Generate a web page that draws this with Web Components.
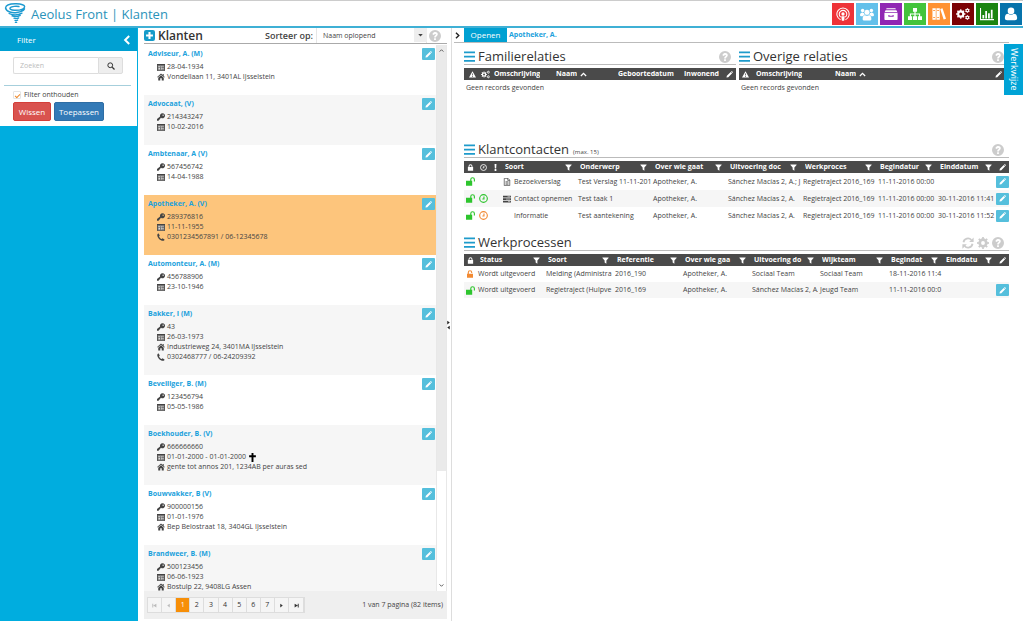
<!DOCTYPE html>
<html lang="nl">
<head>
<meta charset="utf-8">
<title>Aeolus Front | Klanten</title>
<style>
html, body { margin: 0; height: 100%; }
body { font-family: "Open Sans", "Noto Sans", sans-serif; font-size: 7px; line-height: 10px; color: #444; background: #fff; overflow: hidden;
  --blue: #00a0d2; --link: #1ba1dc; --edit: #55bfdc; --dark: #4a4a4a; }
</style>
</head>
<body>
<ae-app></ae-app>
<script>
const define = (name, html, setup) => {
  const template = document.createElement('template');
  template.innerHTML = html;
  customElements.define(name, class extends HTMLElement {
    connectedCallback() {
      if (this.shadowRoot) return;
      const root = this.attachShadow({ mode: 'open' });
      root.append(template.content.cloneNode(true));
      if (setup) setup(this, root);
    }
  });
};

const gear = (cx, cy, r, teeth = 8) => {
  let s = `<circle cx="${cx}" cy="${cy}" r="${r * 0.6}" fill="none" stroke="currentColor" stroke-width="${r * 0.5}"/>`;
  for (let i = 0; i < teeth; i++) s += `<rect x="${cx - r * 0.17}" y="${cy - r * 1.08}" width="${r * 0.34}" height="${r * 0.34}" transform="rotate(${i * 360 / teeth} ${cx} ${cy})"/>`;
  return s;
};
const icons = {
  podcast: '<g fill="none" stroke="currentColor"><path stroke-width="1.2" d="M5.2 14.6A7 7 0 1 1 10.8 14.6M5.4 11.6A4.3 4.3 0 1 1 10.6 11.6"/></g><circle cx="8" cy="8" r="1.9"/><path d="M6 10.6h4l-.7 5H6.7z"/>',
  users: '<circle cx="3" cy="4" r="2"/><circle cx="13" cy="4" r="2"/><circle cx="8" cy="6" r="2.9"/><path d="M0 9.8C0 7 1.500 6.300 3 6.400l1.600.8C4.700 8 5 8.600 5.500 9 4 9.200 3.600 9.800 3.200 10.500H1zM16 9.800C16 7 14.500 6.300 13 6.400l-1.600.8c-.1.800-.4 1.400-.9 1.800 1.500.2 1.900.8 2.300 1.500H15zM3 14c0-3.400 1-4.700 2.800-4.700 1.400 1 3 1 4.400 0C12 9.300 13 10.600 13 14c0 1-1 1.500-2 1.500H5c-1 0-2-.5-2-1.500z"/>',
  archive: '<path d="M3 1.500h10l.6 1.200H2.400zM1.800 3.600h12.400l1 2H.8zM.5 6.500h15V14q0 .8-.8.8H1.300q-.8 0-.8-.8zM5 9v2.200h6V9h-1.200v1H6.200V9z" fill-rule="evenodd"/>',
  sitemap: '<path d="M5.700 1h4.600v4.300H8.700v2h5.200v3.200H16v4.300h-4.700v-4.300h1.300v-2H8.700v2h1.600v4.300H5.700v-4.300h1.600v-2H3.400v2h1.300v4.300H0v-4.300h2.100V7.300h5.200v-2H5.700z"/>',
  books: '<path d="M.5 1.500h3.800v13H.5zM5.100 1.500h3.800v13H5.100zM9.400 2.300 12 1.400l4 12-2.700 1z"/><path d="M1.300 4h2.200M1.300 12h2.200M5.900 4h2.200M5.900 12h2.200" stroke="#ff9233" stroke-width="1"/>',
  cogs: gear(5.400, 8, 4.900) + gear(13, 4, 2.600, 6) + gear(13, 12, 2.600, 6),
  chart: '<path d="M0 1h1.200v12.800H16V15H0zM2.800 9h2v4h-2zM6 4.500h2V13H6zM9.200 7h2v6h-2zM12.400 3h2v10h-2z"/>',
  user: '<circle cx="8" cy="4.500" r="3.800"/><path d="M1 12.500c0-3.600 1.800-4.700 3.800-4.700 2 1.500 4.400 1.500 6.400 0 2 0 3.800 1.100 3.800 4.700 0 1.600-1 2.600-2.500 2.600h-9C2 15.100 1 14.100 1 12.500z"/>',
  search: '<path d="m10.500 10.500 4.500 4.500" stroke="currentColor" stroke-width="2.400"/><circle cx="6.500" cy="6.500" r="4.800" fill="none" stroke="currentColor" stroke-width="2"/>',
  left: '<path d="M11.500 1.500 5 8l6.500 6.500" fill="none" stroke="currentColor" stroke-width="3.200"/>',
  right: '<path d="M4.500 1.500 11 8l-6.500 6.500" fill="none" stroke="currentColor" stroke-width="3.200"/>',
  up: '<path d="m2 11.500 6-6 6 6" fill="none" stroke="currentColor" stroke-width="3"/>',
  down: '<path d="m2 4.500 6 6 6-6" fill="none" stroke="currentColor" stroke-width="3"/>',
  caret: '<path d="M2 5h12l-6 7z"/>',
  plus: '<path d="M3 0h10q3 0 3 3v10q0 3-3 3H3q-3 0-3-3V3q0-3 3-3zM6.500 3v3.500H3v3h3.500V13h3V9.500H13v-3H9.500V3z" fill-rule="evenodd"/>',
  help: '<path fill-rule="evenodd" d="M8 0a8 8 0 1 1 0 16A8 8 0 0 1 8 0zM4.500 5.500l2 1C7.500 4.800 9.300 5 9.300 6c0 1-2.500 1.300-2.500 4h2.400c0-1.600 2.500-1.900 2.500-4.300 0-3.400-5.400-4.200-7.200-.2zM6.800 11v2.300h2.400V11z"/>',
  pencil: '<path d="m1 15 1-4.300L10.800 2l3.200 3.200L5.300 14zM11.600 1.200l.9-.8q.7-.6 1.400 0l1.700 1.700q.6.700 0 1.400l-.8.900z"/>',
  key: '<path fill-rule="evenodd" d="M11 .5a5 5 0 1 1-3 9L3 15.500H0V12l6.200-5A5 5 0 0 1 11 .5zm1.200 2.600a1.300 1.300 0 1 0 .1 0z"/>',
  date: '<path fill="#777" d="M0 2h16v13.500H0z"/><path d="M0 2h16v2.200H0zM0 2h1.200v13.500H0zM14.800 2H16v13.500h-1.200zM0 14.300h16v1.200H0z"/><path fill="#ddd" d="M2.500 6H6v1.500H2.500zM7.500 6h2v1.500h-2zM11 6h2v1.500h-2zM3 9.500h3V13H3zM8 9h1.500v4H8zM11 10h2v2.500h-2z"/>',
  home: '<path d="M8 1 .3 8l1 1.200L8 3.300l6.700 5.900 1-1.200-2.300-2.100V2.200h-2v1.900zM8 4.600 2.500 9.400V15h4v-4.500h3V15h4V9.400z"/>',
  phone: '<path d="M3.300 1 5.500 5 4 6.800C5 9.200 7 11.200 9.300 12.200l1.700-1.600 4 2.200c.2 1.400-1 2.700-3 2.900C6.500 15.500.5 9.500.5 4 .7 2 2 .8 3.300 1z"/>',
  cross: '<path d="M6.300 0h3.400v4.200H14v3.200H9.700V16H6.300V7.400H2V4.200h4.300z"/>',
  bars: '<path d="M0 0h16v2.600H0zM0 6.200h16v2.600H0zM0 12.400h16V15H0z"/>',
  warn: '<path fill-rule="evenodd" d="M8 .8 16 15H0zM7 5.500l.3 4.700h1.400L9 5.500zm0 6v1.900h2v-1.900z"/>',
  lock: '<path fill-rule="evenodd" d="M2 7h1.500V5a4.500 4.500 0 0 1 9 0v2H14v8.500H2zm3.700 0h4.600V5a2.300 2.300 0 0 0-4.600 0z"/>',
  unlock: '<path d="M0 6.500h7.500V4.500a4.200 4.200 0 0 1 8.400 0V8h-2V4.500a2.200 2.200 0 0 0-4.400 0v2H11v9H0z"/>',
  unlockalt: '<path d="M2 7.500h1.500V5a4.500 4.500 0 0 1 9 0v.8h-2.200V5a2.300 2.300 0 0 0-4.600 0v2.500H14v8H2z"/>',
  clock: '<g fill="none" stroke="currentColor" stroke-width="2"><circle cx="8" cy="8" r="6.800"/><path d="M8.800 4.500v4.300H6"/></g>',
  bang: '<path d="M5.800 0h4.400l-.7 10h-3zM6 11.500h4V16H6z"/>',
  filter: '<path d="M1 1h14v1.500L10 8v7.500L6 12.500V8L1 2.500z"/>',
  file: '<path d="M2.500.700h7.500l3.500 3.500v11h-11zM9.500 1v3.800h4M5 7.500h6M5 10h6M5 12.500h6" fill="none" stroke="currentColor" stroke-width="1.400"/>',
  tasks: '<path d="M0 1.500h16v3.600H0zM0 6.400h16V10H0zM0 11.300h16v3.600H0z"/><path d="M9 3.300h5.500M6 8.200h8.500M10 13.100h4.500" stroke="#fff" stroke-width="1"/>',
  refresh: '<path d="M2 7a6 6 0 0 1 10.500-3M14 9a6 6 0 0 1-10.500 3" fill="none" stroke="currentColor" stroke-width="2.400"/><path d="M15.500.5v6h-6zM.5 15.500v-6h6z"/>',
  gear: gear(8, 8, 7.300),
  first: '<path d="M1 2h3v12H1zM14 2v12L4 8z"/>',
  prev: '<path d="M12 2v12L4 8z"/>',
  next: '<path d="M4 2v12l8-6z"/>',
  last: '<path d="M12 2h3v12h-3zM2 2v12l10-6z"/>',
  tornado: '<g fill="none" stroke="#1d9ad0" stroke-linecap="round"><path stroke-width="1.100" d="M.8 3.800C1 1.500 5 .5 9 .6c4 .1 6.500 1 6.300 2.300C15 4.800 11 5.600 7.500 5.500 5 5.400 3.500 4.500 4.500 3.500 5.500 2.500 9 2.300 11 2.700M.8 3.800C1.500 7 6 7.700 9.500 7.200c3-.4 5-1.300 5.700-2.700"/><path stroke-width="1" d="M3.500 8c3 1.500 7 1.300 9.800-.3M5.700 9.900c2.300.8 4.700.5 6.300-.5M7.200 11.600c1.500.5 2.700.3 3.600-.3M8 13.200c.8.300 1.500.2 2-.1M8.300 14.800l1-.1"/></g>'
};
define('ae-icon', `<style>:host{display:inline-block;width:8px;height:8px;flex:none}svg{display:block;width:100%;height:100%;fill:currentColor}</style><svg viewBox="0 0 16 16" aria-hidden="true"></svg>`,
  (el, root) => { root.querySelector('svg').innerHTML = icons[el.getAttribute('name')]; });

define('ae-edit', `<style>:host{display:block;width:13px;height:12px;flex:none}button{display:grid;place-items:center;width:100%;height:100%;padding:0;border:0;border-radius:1px;background:var(--edit);color:#fff}ae-icon{width:7px;height:7px}</style><button aria-label="Bewerken"><ae-icon name="pencil"></ae-icon></button>`);

define('ae-header', `<style>
:host{display:flex;align-items:center;height:28px;box-sizing:border-box;border-top:1px solid #ccc;border-bottom:2px solid #3fb0d5;padding:0 1px 0 4px}
.logo{width:22px;height:21px}
h1{margin:0 auto 0 5px;font-size:13px;line-height:20px;font-weight:400;color:#2b93ba}
nav{display:flex;gap:2px}
a{display:grid;place-items:center;width:22px;height:22px;color:#fff}
a ae-icon{width:14px;height:14px}
</style><ae-icon class="logo" name="tornado"></ae-icon><h1>Aeolus Front | Klanten</h1><nav></nav>`,
  (el, root) => {
    root.querySelector('nav').innerHTML = [['podcast', '#ee3338', 'Signalen'], ['users', '#63c0ea', 'Klanten'], ['archive', '#9026b3', 'Archief'], ['sitemap', '#43c43c', 'Organisatie'], ['books', '#ff9233', 'Bibliotheek'], ['cogs', '#7b0205', 'Beheer'], ['chart', '#1c8510', 'Rapportage'], ['user', '#0673ab', 'Profiel']]
      .map(([n, c, l]) => `<a href="#" aria-label="${l}" style="background:${c}"><ae-icon name="${n}"></ae-icon></a>`).join('');
  });

define('ae-filter', `<style>
:host{display:block;background:#00addf;padding-right:1px}
header{display:flex;align-items:center;justify-content:space-between;height:23px;padding:0 5px 0 17px;background:var(--blue);color:#fff}
h2{margin:0;font-size:8px;font-weight:400}
header button{border:0;padding:0;background:none;color:#fff;display:flex}
header ae-icon{width:10px;height:10px}
form{background:#fff;padding:6px 13px 5px}
.search{display:flex;height:17px;width:110px}
.search input{flex:1;min-width:0;box-sizing:border-box;border:1px solid #ddd;border-right:0;border-radius:2px 0 0 2px;padding:0 6px;font:inherit}
.search input::placeholder{color:#bbb}
.search button{width:25px;border:1px solid #ddd;border-radius:0 2px 2px 0;background:#eee;padding:0;color:#333}
hr{border:0;border-top:1px solid #a6cfdc;margin:11px -7px 4px -9px}
label{display:flex;align-items:center;gap:3px;height:10px;font-size:7px}
input[type=checkbox]{appearance:none;margin:0;width:8px;height:8px;border:1px solid #e4e4e4;border-radius:1px;display:grid;place-items:center}
input[type=checkbox]:checked::before{content:"";width:4px;height:2px;border:solid #f08a2c;border-width:0 0 1px 1px;transform:rotate(-45deg)}
.actions{display:flex;gap:3px;margin-top:2px}
.actions button{height:19px;border:1px solid #d43f3a;border-radius:2px;background:#d9534f;color:#fff;font:inherit;font-size:8px;padding:0;width:38px}
.actions .apply{width:50px;background:#337ab7;border-color:#2e6da4}
</style>
<header><h2>Filter</h2><button aria-label="Inklappen"><ae-icon name="left"></ae-icon></button></header>
<form onsubmit="return false"><div class="search"><input type="text" placeholder="Zoeken" aria-label="Zoeken"><button aria-label="Zoek"><ae-icon name="search"></ae-icon></button></div>
<hr><label><input type="checkbox" checked>Filter onthouden</label>
<div class="actions"><button>Wissen</button><button class="apply">Toepassen</button></div></form>`);

define('ae-client', `<style>
:host{display:flex;justify-content:space-between;box-sizing:border-box;padding:3px 1px 13px 4px;flex:none}
:host(:nth-child(even)){background:#f6f6f6}
:host([selected]){background:#fdc57c}
a{display:block;font-weight:700;color:var(--link);text-decoration:none;line-height:13px;height:13px;margin-top:-1px}
ul{list-style:none;margin:2px 0 0;padding:0 0 0 9px}
li{display:flex;align-items:center;height:10px;gap:2px;white-space:pre}
li ae-icon{color:#444}
.cross{color:#000;width:9px;height:9px}
</style><div><a href="#"></a><ul></ul></div><ae-edit></ae-edit>`,
  (el, root) => {
    root.querySelector('a').textContent = el.getAttribute('name');
    root.querySelector('ul').innerHTML = ['key', 'date', 'home', 'phone'].filter(k => el.dataset[k])
      .map(k => `<li><ae-icon name="${k}"></ae-icon><span>${el.dataset[k]}</span>${k === 'date' && el.hasAttribute('deceased') ? '<ae-icon class="cross" name="cross"></ae-icon>' : ''}</li>`).join('');
  });

define('ae-clients', `<style>
:host{display:flex;flex-direction:column;min-height:0;padding-bottom:2px;box-sizing:border-box}
header{display:flex;align-items:center;height:15px;border-bottom:1px solid #aaa;flex:none;padding-right:6px}
h2{margin:0 auto 0 3px;font-size:12px;line-height:14px;font-weight:600;color:#333}
.add{color:#159bc9;border:0;background:none;padding:0;display:flex}
.add ae-icon{width:11px;height:11px}
label{font-size:9px;font-weight:600;margin-right:3px}
.select{display:grid;width:111px}
select{grid-area:1/1;appearance:none;width:100%;height:15px;border:1px solid #e6e6e6;border-width:0 1px;background:#fff;font:inherit;color:#444;padding:0 6px}
.select ae-icon{grid-area:1/1;justify-self:end;box-sizing:border-box;width:13px;height:14px;padding:4px 3px;background:#eee;pointer-events:none}
.help{color:#ccc;width:12px;height:12px;margin-left:2px}
.body{display:flex;flex:1;min-height:0;margin-top:1px;overflow:hidden}
.items{flex:1;display:flex;flex-direction:column;overflow:hidden}
.bar{width:11px;display:flex;flex-direction:column;align-items:center;box-sizing:border-box;border:1px solid #e8e8e8;border-width:0 1px}
.bar ae-icon{width:5px;height:5px;padding:3px 0;color:#555}
.bar .thumb{flex:0 1 78%;align-self:stretch;background:#eaeaea;text-align:center}
.bar .rest{flex:1}
footer{display:flex;align-items:center;justify-content:space-between;height:28px;flex:none;background:#efefef;padding:0 4px 0 3px}
nav{display:grid;grid-template-columns:repeat(10,1fr) 15px;width:158px;height:16px;box-sizing:border-box;border:1px solid #ddd;background:#f5f5f5}
nav button{border:0;border-right:1px solid #ddd;background:none;padding:0;font:inherit;color:#333;display:grid;place-items:center;min-width:0}
nav button[aria-current]{background:#f78f08;color:#fff}
nav button:disabled{color:#bbb}
nav ae-icon{width:5px;height:5px}
</style>
<header><button class="add" aria-label="Toevoegen"><ae-icon name="plus"></ae-icon></button><h2>Klanten</h2><label for="sort">Sorteer op:</label><div class="select"><select id="sort"><option>Naam oplopend</option></select><ae-icon name="caret"></ae-icon></div><ae-icon class="help" name="help"></ae-icon></header>
<div class="body"><div class="items">
<ae-client name="Adviseur, A. (M)" data-date="28-04-1934" data-home="Vondellaan 11, 3401AL IJsselstein"></ae-client>
<ae-client name="Advocaat, (V)" data-key="214343247" data-date="10-02-2016"></ae-client>
<ae-client name="Ambtenaar, A (V)" data-key="567456742" data-date="14-04-1988"></ae-client>
<ae-client selected name="Apotheker, A. (V)" data-key="289376816" data-date="11-11-1955" data-phone="0301234567891 / 06-12345678"></ae-client>
<ae-client name="Automonteur, A. (M)" data-key="456788906" data-date="23-10-1946"></ae-client>
<ae-client name="Bakker, I (M)" data-key="43" data-date="26-03-1973" data-home="Industrieweg 24, 3401MA IJsselstein" data-phone="0302468777 / 06-24209392"></ae-client>
<ae-client name="Beveiliger, B. (M)" data-key="123456794" data-date="05-05-1986"></ae-client>
<ae-client deceased name="Boekhouder, B. (V)" data-key="666666660" data-date="01-01-2000 - 01-01-2000" data-home="gente tot annos 201, 1234AB per auras sed"></ae-client>
<ae-client name="Bouwvakker, B (V)" data-key="900000156" data-date="01-01-1976" data-home="Bep Belostraat 18, 3404GL IJsselstein"></ae-client>
<ae-client name="Brandweer, B. (M)" data-key="500123456" data-date="06-06-1923" data-home="Bostulp 22, 9408LG Assen"></ae-client>
</div><div class="bar"><div class="thumb"><ae-icon name="up"></ae-icon></div><div class="rest"></div><ae-icon name="down"></ae-icon></div></div>
<footer><nav aria-label="Pagina's"><button disabled aria-label="Eerste"><ae-icon name="first"></ae-icon></button><button disabled aria-label="Vorige"><ae-icon name="prev"></ae-icon></button><button aria-current="page">1</button><button>2</button><button>3</button><button>4</button><button>5</button><button>6</button><button>7</button><button aria-label="Volgende"><ae-icon name="next"></ae-icon></button><button aria-label="Laatste"><ae-icon name="last"></ae-icon></button></nav><span>1 van 7 pagina (82 items)</span></footer>`);

define('ae-panel', `<style>
:host{display:block;min-width:0}
header{display:flex;align-items:center;gap:3px;height:15px;border-bottom:1px solid #bbb;margin-bottom:3px}
.bars{width:11px;height:12px;color:#1e9bcb}
h2{margin:0;font-size:13px;line-height:15px;font-weight:400;color:#333;white-space:nowrap}
small{font-size:6px;margin-left:1px;padding-top:4px}
.tools{margin-left:auto;display:flex;gap:3px;color:#ccc;padding-right:5px}
.tools ae-icon{width:12px;height:12px}
</style><header><ae-icon class="bars" name="bars"></ae-icon><h2></h2><small></small><span class="tools"></span></header><slot></slot>`,
  (el, root) => {
    root.querySelector('h2').textContent = el.getAttribute('heading');
    root.querySelector('small').textContent = el.getAttribute('note') || '';
    root.querySelector('.tools').innerHTML = el.getAttribute('tools').split(' ').map(n => `<ae-icon name="${n}"></ae-icon>`).join('');
  });

/* Column: [width, label, icon after label]; a label that starts with @ is an icon. */
const grids = {
  family: { cols: [[16, '@warn'], [10, '@cogs'], [62, 'Omschrijving'], [62, 'Naam', 'up'], [66, 'Geboortedatum'], [43, 'Inwonend'], [13, '@pencil']], empty: 'Geen records gevonden' },
  other: { cols: [[13, '@warn'], [79, 'Omschrijving'], [161, 'Naam', 'up'], [13, '@pencil'], [4, '']], empty: 'Geen records gevonden' },
  contacts: {
    row: 17,
    cols: [[13, '@lock'], [13, '@clock'], [11, '@bang'], [75, 'Soort', 'filter'], [75, 'Onderwerp', 'filter'], [75, 'Over wie gaat', 'filter'], [75, 'Uitvoering doc', 'filter'], [75, 'Werkproces', 'filter'], [60, 'Begindatur', 'filter'], [60, 'Einddatum', 'filter'], [13, '@pencil']],
    rows: [
      ['@unlock:g', '', '', '@file Bezoekverslag', 'Test Verslag 11-11-201', 'Apotheker, A.', 'Sánchez Macías 2, A.; J', 'Regietraject 2016_169', '11-11-2016 00:00', '', '*'],
      ['@unlock:g', '@clock:g', '', '@tasks Contact opnemen', 'Test taak 1', 'Apotheker, A.', 'Sánchez Macías 2, A.', 'Regietraject 2016_169', '11-11-2016 00:00', '30-11-2016 11:41', '*'],
      ['@unlock:g', '@clock:o', '', '- Informatie', 'Test aantekening', 'Apotheker, A.', 'Sánchez Macías 2, A.', 'Regietraject 2016_169', '11-11-2016 00:00', '30-11-2016 11:52', '*']]
  },
  processes: {
    row: 16,
    cols: [[12, '@lock'], [68, 'Status', 'filter'], [69, 'Soort', 'filter'], [68, 'Referentie', 'filter'], [69, 'Over wie gaa', 'filter'], [68, 'Uitvoering do', 'filter'], [69, 'Wijkteam', 'filter'], [55, 'Begindat', 'filter'], [54, 'Einddatu', 'filter'], [13, '@pencil']],
    rows: [
      ['@unlockalt:o', 'Wordt uitgevoerd', 'Melding (Administra', '2016_190', 'Apotheker, A.', 'Sociaal Team', 'Sociaal Team', '18-11-2016 11:4', '', ''],
      ['@unlock:g', 'Wordt uitgevoerd', 'Regietraject (Hulpve', '2016_169', 'Apotheker, A.', 'Sánchez Macías 2, A.', 'Jeugd Team', '11-11-2016 00:0', '', '*']]
  }
};
define('ae-grid', `<style>
:host{display:block}
table{table-layout:fixed;width:100%;border-collapse:collapse}
th{padding:0;height:12px;background:var(--dark);color:#fff;font-weight:700;text-align:left}
th>div{display:flex;align-items:center;padding:0 4px;white-space:nowrap;height:12px;overflow:hidden;gap:3px}
th>div.plain{padding-right:0}
th>div.icon,td>div.icon{justify-content:center;padding:0}
th ae-icon{width:7px;height:7px}
th .cogs{width:9px;height:9px}
th span{overflow:hidden;min-width:0}
th span.grow{flex:1}
td{padding:0;height:var(--row,16px)}
td>div{display:flex;align-items:center;overflow:hidden;white-space:nowrap;padding-left:2px;gap:3px;height:var(--row,16px)}
tbody tr:nth-child(even){background:#f6f6f6}
.lead{width:8px;flex:none}
td .unlock,td .clock{width:9px;height:9px}
.g{color:#2ec52e}.o{color:#f28a33}
</style><table><colgroup></colgroup><thead><tr></tr></thead><tbody></tbody></table>`,
  (el, root) => {
    const grid = grids[el.getAttribute('source')];
    const icon = s => { const [n, c = ''] = s.slice(1).split(':'); return `<ae-icon name="${n}" class="${n} ${c}"></ae-icon>`; };
    const cell = s => {
      if (s === '*') return '<div class="icon"><ae-edit></ae-edit></div>';
      if (s.startsWith('- ')) return `<div><span class="lead"></span><span>${s.slice(2)}</span></div>`;
      if (s[0] !== '@') return `<div><span>${s}</span></div>`;
      const i = s.indexOf(' ');
      return i < 0 ? `<div class="icon">${icon(s)}</div>` : `<div>${icon(s.slice(0, i))}<span>${s.slice(i + 1)}</span></div>`;
    };
    el.style.setProperty('--row', (grid.row || 16) + 'px');
    root.querySelector('colgroup').innerHTML = grid.cols.map(c => `<col style="width:${c[0]}px">`).join('');
    root.querySelector('thead tr').innerHTML = grid.cols.map(([, l, a]) => l[0] === '@' ? `<th><div class="icon">${icon(l)}</div></th>`
      : `<th><div class="${a ? '' : 'plain'}"><span class="${a === 'filter' ? 'grow' : ''}">${l}</span>${a ? `<ae-icon name="${a}"></ae-icon>` : ''}</div></th>`).join('');
    root.querySelector('tbody').innerHTML = grid.rows ? grid.rows.map(r => `<tr>${r.map(c => `<td>${cell(c)}</td>`).join('')}</tr>`).join('')
      : `<tr><td colspan="${grid.cols.length}">${cell(grid.empty)}</td></tr>`;
  });

define('ae-detail', `<style>
:host{display:block;border-left:1px solid #ddd;padding:0 14px 0 2px;min-width:0}
.tabs{display:flex;align-items:center;height:14px;border-bottom:1px solid #bbb}
.tabs ae-icon{width:7px;height:9px;margin-right:3px;color:#222}
.open{border:0;background:var(--blue);color:#fff;font:inherit;font-size:8px;height:14px;width:43px;padding:0}
.tabs a{color:var(--link);font-weight:700;text-decoration:none;margin-left:2px}
main{padding-left:10px;display:grid;grid-template-columns:272fr 270fr;column-gap:3px}
.rel{height:87px;padding-top:6px}
.wide{grid-column:1/-1;padding-top:6px}
.last{padding-top:11px}
</style>
<div class="tabs"><ae-icon name="right"></ae-icon><button class="open">Openen</button><a href="#">Apotheker, A.</a></div>
<main><ae-panel class="rel" heading="Familierelaties" tools="help"><ae-grid source="family"></ae-grid></ae-panel>
<ae-panel class="rel" heading="Overige relaties" tools="help"><ae-grid source="other"></ae-grid></ae-panel>
<ae-panel class="wide" heading="Klantcontacten" note="(max. 15)" tools="help"><ae-grid source="contacts"></ae-grid></ae-panel>
<ae-panel class="wide last" heading="Werkprocessen" tools="refresh gear help"><ae-grid source="processes"></ae-grid></ae-panel></main>`);

define('ae-app', `<style>
:host{display:grid;grid-template:auto minmax(0,1fr)/138px 303px 4px minmax(0,1fr);height:100vh;position:relative;column-gap:0}
ae-header{grid-column:1/-1}
ae-clients{margin-left:6px;width:303px}
.split{margin-left:5px;display:flex;flex-direction:column;justify-content:center;color:#222}
.split ae-icon{width:5px;height:5px}
ae-detail{margin-left:6px}
.guide{position:absolute;top:44px;right:0;width:19px;height:51px;border:0;padding:0;background:#00a3d6;color:#fff;font:inherit;font-size:9px;writing-mode:vertical-rl}
</style><ae-header></ae-header><ae-filter></ae-filter><ae-clients></ae-clients><div class="split"><ae-icon name="next"></ae-icon><ae-icon name="prev"></ae-icon></div><ae-detail></ae-detail><button class="guide">Werkwijze</button>`);
</script>
</body>
</html>
